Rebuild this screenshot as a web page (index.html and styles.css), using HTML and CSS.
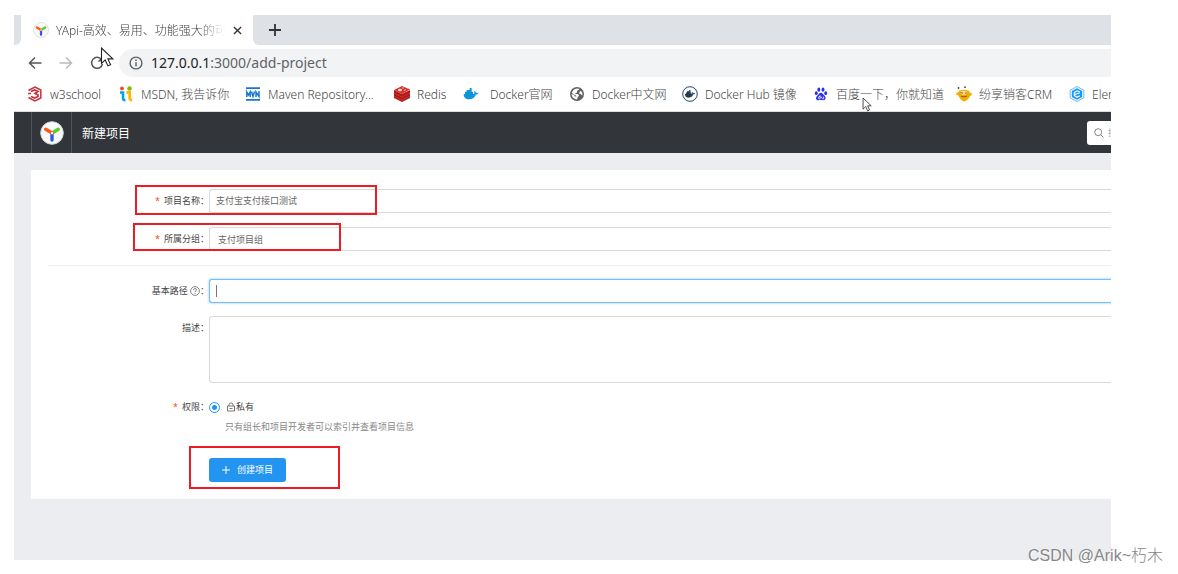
FILE: index.html
```html
<!DOCTYPE html>
<html lang="zh-CN">
<head>
<meta charset="utf-8">
<title>YApi-高效、易用、功能强大的可视化接口管理平台</title>
<link rel="stylesheet" href="styles.css">
</head>
<body>
<svg class="defs" width="0" height="0" aria-hidden="true">
  <symbol id="yapi" viewBox="0 0 24 24">
    <circle cx="12" cy="12" r="11.3" fill="#fafafa" stroke="#d0d3d6" stroke-width="1"/>
    <path d="M12 12v7" stroke="#2657f5" stroke-width="3.4" stroke-linecap="round"/>
    <path d="M12.600 11.700 18.300 8.300" stroke="#57cf27" stroke-width="3.400" stroke-linecap="round"/>
    <path d="M5.700 8.300 12 12" stroke="#ff561b" stroke-width="3.400" stroke-linecap="round"/>
    <circle cx="12" cy="12" r="1.200" fill="#fff"/>
  </symbol>
  <symbol id="whale" viewBox="0 0 24 24">
    <path d="M1 12h15.500c.8-1.300.4-3 .2-3.500l1-1c1 .8 1.500 1.600 1.600 2.700 1.300-.3 2.600 0 3.700.5-.6 1.400-2 2-3.700 2C18 17 14.500 20 9 20c-5 0-8-2.500-8-8Z"/>
    <path d="M3 8.500h12V12H3zM5.500 6H13v3H5.500zM10 3h3v3.500h-3z"/>
  </symbol>
  <symbol id="pointer" viewBox="0 0 14 20">
    <path d="M1.500 1v15.500l3.700-3.600 2.700 6 2.700-1.200-2.700-5.800h5Z" fill="#fff" stroke="#222" stroke-width="1.100"/>
  </symbol>
</svg>

<div class="browser">
  <div class="tabs">
    <div class="tab-edge"></div>
    <div class="tab">
      <svg class="icon"><use href="#yapi"/></svg>
      <span class="tab-title">YApi-高效、易用、功能强大的可</span>
      <button class="plain" aria-label="关闭标签页"><svg width="9" height="9" viewBox="0 0 10 10"><path d="m1 1 8 8M9 1 1 9" stroke="#333" stroke-width="1.500"/></svg></button>
    </div>
    <div class="tab-rest">
      <button class="plain" aria-label="新建标签页"><svg width="12" height="12" viewBox="0 0 12 12"><path d="M6 0v12M0 6h12" stroke="#333" stroke-width="1.800"/></svg></button>
    </div>
  </div>

  <div class="toolbar">
    <button class="plain" aria-label="后退"><svg width="14" height="14" viewBox="0 0 14 14" fill="none" stroke="#54575b" stroke-width="1.500"><path d="M13.500 7H1.500M7 1.500 1.500 7 7 12.500"/></svg></button>
    <button class="plain" aria-label="前进"><svg width="14" height="14" viewBox="0 0 14 14" fill="none" stroke="#b9bbbe" stroke-width="1.500"><path d="M.5 7h12M7 1.500 12.500 7 7 12.500"/></svg></button>
    <button class="plain" aria-label="重新加载"><svg width="14" height="14" viewBox="0 0 14 14"><path d="M11.500 3.500A5.500 5.500 0 1 0 12.500 8" fill="none" stroke="#54575b" stroke-width="1.500"/><path d="M13 0v5.500H7.500z" fill="#54575b"/></svg></button>
    <div class="address">
      <svg width="14" height="14" viewBox="0 0 14 14"><circle cx="7" cy="7" r="5.900" fill="none" stroke="#5f6368" stroke-width="1.400"/><path d="M7 6.200v4M7 3.500v1.400" stroke="#5f6368" stroke-width="1.500"/></svg>
      <span><b>127.0.0.1</b>:3000/add-project</span>
    </div>
    <svg class="pointer pointer-main"><use href="#pointer"/></svg>
  </div>

  <nav class="bookmarks">
    <a href="#"><svg class="icon" viewBox="0 0 16 16" fill="none" stroke="#c8323a" stroke-width="1.500"><path d="M2.200 5V4L8 1l5.800 3v8L8 15l-5.800-3v-1"/><path d="M1 7.500h3M4 5.500 7.500 4l3.500 1.500L8 7.500l3 1.500v1.500L7.500 12 4 10.500" stroke-width="1.700"/></svg><span>w3school</span></a>
    <a href="#"><svg class="icon" viewBox="0 0 16 16"><circle cx="4" cy="2.500" r="2" fill="#f25022"/><circle cx="11.500" cy="2.500" r="2.200" fill="#7fba00"/><path d="M2 6.500h3V12q0 2.300 2.500 2.300" fill="none" stroke="#00a4ef" stroke-width="2.600"/><path d="M8.500 6.500h3.200V12q0 2 2.500 2" fill="none" stroke="#ffb900" stroke-width="2.800"/></svg><span>MSDN, 我告诉你</span></a>
    <a href="#"><svg class="icon" viewBox="0 0 16 16" fill="none" stroke="#1976d2"><path d="M1 2.200h14M1 13.800h14" stroke-width="1.700"/><path d="M1.800 11V6l1.700 3 1.700-3v5M6.500 5.500 8 10.500l1.500-5M11 11V6l3 4.500V5" stroke-width="1.500"/></svg><span>Maven Repository...</span></a>
    <a href="#"><svg class="icon" viewBox="0 0 16 16"><path d="M0 4v8l8 4 8-4V4L8 8z" fill="#a91b17"/><path d="m8 0 8 3.500L8 8 0 4z" fill="#d9322b"/><path d="m0 7 8 4 8-4M0 10.200l8 3.800 8-3.800" fill="none" stroke="#d5322c"/><path d="m4 4 2-1 2 1-2 1zM8 2h2M10 4.500l2-1" stroke="#fff" stroke-width=".6" fill="#fff"/></svg><span>Redis</span></a>
    <a href="#"><svg class="icon whale"><use href="#whale"/></svg><span>Docker官网</span></a>
    <a href="#"><svg class="icon" viewBox="0 0 16 16"><circle cx="8" cy="8" r="7" fill="#5f6368"/><path d="M9 2.500c1.500.5 1.500 1.200.5 1.500L8 5v1.500L5.500 8H9l1 1.500-1.500 2L8 13.500C4.500 13 2.800 11 2.500 8L5 9l1 1.500h1.500L7 9.500 4 8 2.800 6.500C4 4 6 2.500 9 2.500ZM11 5l1.500.5c1 1.500 1.200 3 .7 4L11.500 8 10 7.500Z" fill="#fff"/></svg><span>Docker中文网</span></a>
    <a href="#"><svg class="icon" viewBox="0 0 16 16"><circle cx="8" cy="8" r="7.300" fill="#fff" stroke="#29485f" stroke-width="1"/><svg x="2" y="2.500" width="12" height="11" fill="#203d54"><use href="#whale"/></svg></svg><span>Docker Hub 镜像</span></a>
    <a href="#"><svg class="icon baidu" viewBox="0 0 16 16" fill="#2932e1"><ellipse cx="5.500" cy="3" rx="1.700" ry="2.400"/><ellipse cx="10.300" cy="3" rx="1.700" ry="2.400"/><ellipse cx="2.600" cy="7" rx="1.700" ry="2.200"/><ellipse cx="13.400" cy="7" rx="1.700" ry="2.200"/><path d="M8 6.500c1.500 0 2 1.500 3.500 2.800 3 2.500 2 5.700-1 5.700-1.500 0-3.500-.3-5 0-3 .4-4.300-2.500-2-4.800C5.500 8.500 6 6.500 8 6.500Z"/><path d="M7 9.500v4H5.500q-1-1.300 0-2.500H7M8.700 11v1.500q.5 1 2.300 1V11" fill="none" stroke="#fff" stroke-width=".9"/></svg><span>百度一下，你就知道</span></a>
    <a href="#"><svg class="icon" viewBox="0 0 16 16"><path d="M3.500 4.500C7 3 14 3.500 14 7q2-.5 2 1t-2 2c-1 3-3.500 5-6 5.500C5 14.500 3 12 2.500 9.500L0 8.500Q.5 6 2.500 6Z" fill="#f7aa00"/><path d="M4 5.500q4-1.500 8 .5-.5 3-4 3T4 5.500Z" fill="#ffe08a"/><path d="M4.500 6.500 7 7.200M9 7.200l2.500-.4M5 10.200q3 1.500 6-.2" fill="none" stroke="#7c5203" stroke-width=".9"/><circle cx="2.500" cy="2" r=".9" fill="#444"/><circle cx="9" cy="1.200" r=".9" fill="#444"/></svg><span>纷享销客CRM</span></a>
    <a href="#"><svg class="icon" viewBox="0 0 16 16"><path d="m8 .5 6.800 3.700v7.600L8 15.500l-6.800-3.700V4.200z" fill="#fff" stroke="#40a9ff" stroke-width=".8"/><path d="m8 2.200 5.200 2.900v5.800L8 13.800l-5.200-2.900V5.100z" fill="#1598ff"/><path d="M10.800 5.800 8 4.800 5.300 6.500v3L8 11.300l2.800-1.500M6 8.500l4.800-1.700" fill="none" stroke="#fff" stroke-width="1.200"/></svg><span>Element</span></a>
    <svg class="pointer pointer-bookmark"><use href="#pointer"/></svg>
  </nav>

  <header class="app-header">
    <a class="logo" href="#" aria-label="YApi"><svg width="24" height="24"><use href="#yapi"/></svg></a>
    <span class="app-title">新建项目</span>
    <label class="search">
      <svg width="10" height="10" viewBox="0 0 10 10" fill="none" stroke="#777" stroke-width=".9"><circle cx="4.200" cy="4.200" r="3.500"/><path d="m6.800 6.800 2.700 2.700"/></svg>
      <input type="text" placeholder="搜索分组/项目/接口" aria-label="搜索">
    </label>
  </header>

  <main class="page">
    <form class="card">
      <div class="row">
        <label class="required" for="name">项目名称：</label>
        <input class="field" id="name" type="text" value="支付宝支付接口测试">
        <i class="mark mark-name"></i>
      </div>
      <div class="row">
        <label class="required" for="group">所属分组：</label>
        <select class="field" id="group"><option>支付项目组</option></select>
        <i class="mark mark-group"></i>
      </div>
      <hr>
      <div class="row base-path">
        <label for="path">基本路径 <svg class="help" width="10" height="10" viewBox="0 0 10 10" fill="none" stroke="#666" stroke-width=".8"><circle cx="5" cy="5" r="4.400"/><path d="M3.500 4q0-1.500 1.500-1.500T6.500 4Q6.500 4.700 5 5.500v.7M5 7v.9"/></svg>：</label>
        <div class="focus-wrap"><input class="field focused" id="path" type="text"><i class="caret"></i></div>
      </div>
      <div class="row">
        <label for="desc">描述：</label>
        <textarea class="field" id="desc"></textarea>
      </div>
      <div class="row access">
        <span class="label required">权限：</span>
        <div>
          <label class="choice"><input type="radio" name="access" checked><svg width="8" height="10" viewBox="0 0 8 10" fill="none" stroke="#555" stroke-width=".8"><path d="M.5 4h7v5h-7zM2 4V2.500Q2 1 4 1t2 1.500V4M2.500 6.500h3"/></svg>私有</label>
          <p class="hint">只有组长和项目开发者可以索引并查看项目信息</p>
        </div>
      </div>
      <div class="row">
        <button class="create" type="button"><svg width="8" height="8" viewBox="0 0 8 8"><path d="M4 0v8M0 4h8" stroke="#fff"/></svg>创建项目</button>
        <i class="mark mark-create"></i>
      </div>
    </form>
  </main>
</div>
<div class="watermark">CSDN @Arik~朽木</div>
</body>
</html>
```
FILE: styles.css
```css
* { box-sizing: border-box; }

body {
  margin: 0;
  min-height: 100vh;
  padding: 15px 67px 14px 14px;
  display: flex;
  position: relative;
  background: #fff;
  color: #444;
  font-family: "Noto Sans", "Noto Sans CJK SC", sans-serif;
  font-size: 12px;
  font-weight: 300;
}

.defs { position: absolute; }
svg { display: block; flex: none; }
input, select, textarea, button { font: inherit; color: inherit; }
a { color: inherit; text-decoration: none; }

.plain {
  padding: 0;
  border: 0;
  background: none;
}

.icon { width: 16px; height: 16px; }

.browser {
  flex: 1;
  min-width: 0;
  display: flex;
  flex-direction: column;
  position: relative;
  overflow: hidden;
}

.tabs {
  height: 30px;
  display: flex;
  background: #fff;
}

.tab-edge {
  width: 7px;
  background: #dee1e6;
  border-bottom-right-radius: 6px;
}

.tab {
  width: 232px;
  padding: 0 11px 0 12px;
  display: flex;
  align-items: center;
}

.tab-title {
  flex: 1;
  margin-left: 7px;
  overflow: hidden;
  white-space: nowrap;
  mask-image: linear-gradient(to right, #000 85%, transparent);
}

.tab .plain { margin-left: 8px; }

.tab-rest {
  flex: 1;
  padding-left: 16px;
  display: flex;
  align-items: center;
  background: #dee1e6;
  border-bottom-left-radius: 6px;
}

.toolbar {
  height: 35px;
  padding-left: 14px;
  display: flex;
  align-items: center;
  gap: 17px;
  position: relative;
}

.address {
  flex: 1;
  height: 28px;
  margin-left: -2px;
  padding-left: 10px;
  display: flex;
  align-items: center;
  gap: 8px;
  border-radius: 14px 0 0 14px;
  background: #f1f3f4;
  color: #5f6368;
  font-size: 14px;
  font-weight: 400;
}

.address b { color: #222; font-weight: 400; }

.pointer { position: absolute; }
.pointer-main { width: 14px; height: 20px; left: 86px; top: 2px; }
.pointer-bookmark { width: 10px; height: 15px; left: 848px; top: 17px; }

.bookmarks {
  height: 32px;
  padding: 0 0 3px 13px;
  display: grid;
  grid-template-columns: 91px 127px 149px 69px 106px 113px 131px 143px 113px 80px;
  align-items: center;
  position: relative;
  border-bottom: 1px solid #ddd;
  white-space: nowrap;
}

.bookmarks a { display: flex; align-items: center; gap: 7px; }
.whale { fill: #0d96d9; }
.bookmarks a:nth-child(5) { gap: 11px; }
.bookmarks .baidu { width: 14px; height: 14px; margin: 0 1px; }

.app-header {
  height: 41px;
  padding-left: 17px;
  display: flex;
  align-items: center;
  background: #32363a;
  color: #fff;
}

.logo {
  width: 41px;
  height: 100%;
  display: grid;
  place-items: center;
  border: solid #50555a;
  border-width: 0 1px;
}

.app-title { margin-left: 10px; font-weight: 400; }

.search {
  width: 140px;
  height: 24px;
  margin-left: auto;
  margin-right: -116px;
  padding-left: 7px;
  display: flex;
  flex: none;
  align-items: center;
  gap: 4px;
  border-radius: 3px;
  background: #fff;
  font-size: 9px;
}

.search input {
  width: 110px;
  padding: 0;
  border: 0;
  background: none;
}

.search input::placeholder { color: #888; }

.page {
  flex: 1;
  padding: 17px 0 61px 17px;
  background: #ecedf1;
}

.card {
  padding: 19px 0 17px;
  background: #fff;
  font-size: 9px;
  font-weight: 400;
}

.row {
  margin-bottom: 14px;
  display: grid;
  grid-template-columns: 178px 1fr;
  position: relative;
  line-height: 24px;
}

.row > label, .label { text-align: right; }
.row > * { grid-row: 1; }
.help { display: inline-block; vertical-align: -2px; }

.required::before {
  content: "*";
  margin-right: 4px;
  color: #f04a13;
}

.field {
  display: block;
  width: 100%;
  height: 24px;
  padding: 0 6px;
  appearance: none;
  border: 1px solid #d9d9d9;
  border-right: 0;
  border-radius: 3px 0 0 3px;
  outline: 0;
  background: #fff;
  color: #666;
}

select.field { padding-left: 8px; }
textarea.field { height: 67px; resize: none; }
.field.focused { border-color: #74bdf5; box-shadow: 0 0 2px 1px #c9e6fd; }
.focus-wrap { position: relative; }
.base-path { margin-bottom: 13px; }

.caret {
  position: absolute;
  left: 7px;
  top: 6px;
  width: 1px;
  height: 12px;
  background: #777;
}

hr {
  height: 1px;
  margin: 0 0 13px 17px;
  border: 0;
  background: #f0f0f0;
}

.access { margin-top: -2px; margin-bottom: 23px; }
.choice { height: 24px; display: flex; align-items: center; }

.choice input {
  width: 11px;
  height: 11px;
  margin: 0 7px 0 0;
  appearance: none;
  border: 1px solid #2395f1;
  border-radius: 50%;
  background: radial-gradient(circle, #2395f1 0 2px, #fff 3px);
}

.choice svg { margin-right: 1px; }

.hint {
  margin: 0 0 0 16px;
  line-height: 16px;
  color: #888;
}

.create {
  grid-column: 2;
  width: 77px;
  height: 24px;
  padding: 0;
  display: flex;
  align-items: center;
  justify-content: center;
  gap: 7px;
  border: 0;
  border-radius: 3px;
  background: #2395f1;
  color: #fff;
}

.row:last-child { margin-bottom: 0; }

.mark {
  position: absolute;
  border: 2px solid #ed1c24;
  pointer-events: none;
}

.mark-name { left: 104px; top: -4px; width: 242px; height: 30px; }
.mark-group { left: 102px; top: -4px; width: 208px; height: 28px; }
.mark-create { left: 158px; top: -12px; width: 151px; height: 43px; }

.watermark {
  position: absolute;
  right: 15px;
  bottom: 6px;
  color: #888;
  font-family: "Liberation Sans", "Noto Sans CJK SC", sans-serif;
  font-size: 16px;
  font-weight: 300;
  line-height: 24px;
  text-shadow: 1px 1px #fff;
}
```
